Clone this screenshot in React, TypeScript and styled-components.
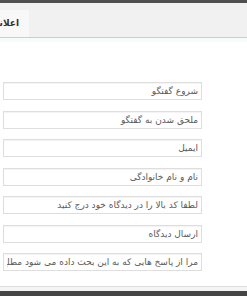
import React from "react";
import styled, { createGlobalStyle } from "styled-components";

const Global = createGlobalStyle`
  html, body { margin: 0; padding: 0; background: #fff; }
  body { width: 247px; height: 296px; overflow: hidden; font-family: "DejaVu Sans", Tahoma, sans-serif; }
`;

const Page = styled.div`
  width: 247px;
  height: 296px;
  display: flex;
  flex-direction: column;
  background: #fff;
  border-top: 3px solid #505050;
  box-sizing: border-box;
`;

const Toolbar = styled.div`
  height: 35px;
  background: #f1f1f1;
  border-bottom: 1px solid #c8cfd0;
  display: flex;
  align-items: flex-end;
  padding-top: 7px;
  box-sizing: border-box;
`;

const Tab = styled.div`
  width: 29px;
  height: 27px;
  background: #f8f8f8;
  direction: rtl;
  white-space: nowrap;
  overflow: hidden;
  padding-right: 10px;
  box-sizing: border-box;
  font-size: 9px;
  font-weight: bold;
  color: #333;
  line-height: 27px;
`;

const Tint = styled.div`
  height: 4px;
  background: #f6fcfc;
`;

const Form = styled.div`
  flex: 1;
  display: flex;
  flex-direction: column;
  gap: 10.5px;
  padding: 40px 45px 0 3px;
`;

const Field = styled.input`
  height: 18px;
  width: 199px;
  box-sizing: border-box;
  border: 1px solid #dedede;
  box-shadow: inset 0 1px 1px rgba(0, 0, 0, 0.05);
  background: #fff;
  direction: rtl;
  text-align: right;
  padding: 0 3px;
  font-family: "DejaVu Sans", Tahoma, sans-serif;
  font-size: 9px;
  color: #5a5a5a;
  outline: none;
  margin: 0;
`;

const Footer = styled.div`
  height: 10px;
  border-top: 1px solid #dcdcdc;
  background: #f4f4f4;
  border-bottom: 5px solid #444;
  box-sizing: border-box;
`;

const labels = [
  "شروع گفتگو",
  "ملحق شدن به گفتگو",
  "ایمیل",
  "نام و نام خانوادگی",
  "لطفا کد بالا را در دیدگاه خود درج کنید",
  "ارسال دیدگاه",
  "مرا از پاسخ هایی که به این بحث داده می شود مطلع کن",
];

export default function App() {
  return (
    <>
      <Global />
      <Page>
        <Toolbar>
          <Tab>اعلانات</Tab>
        </Toolbar>
        <Tint />
        <Form>
          {labels.map((l) => (
            <Field key={l} readOnly value={l} />
          ))}
        </Form>
        <Footer />
      </Page>
    </>
  );
}
